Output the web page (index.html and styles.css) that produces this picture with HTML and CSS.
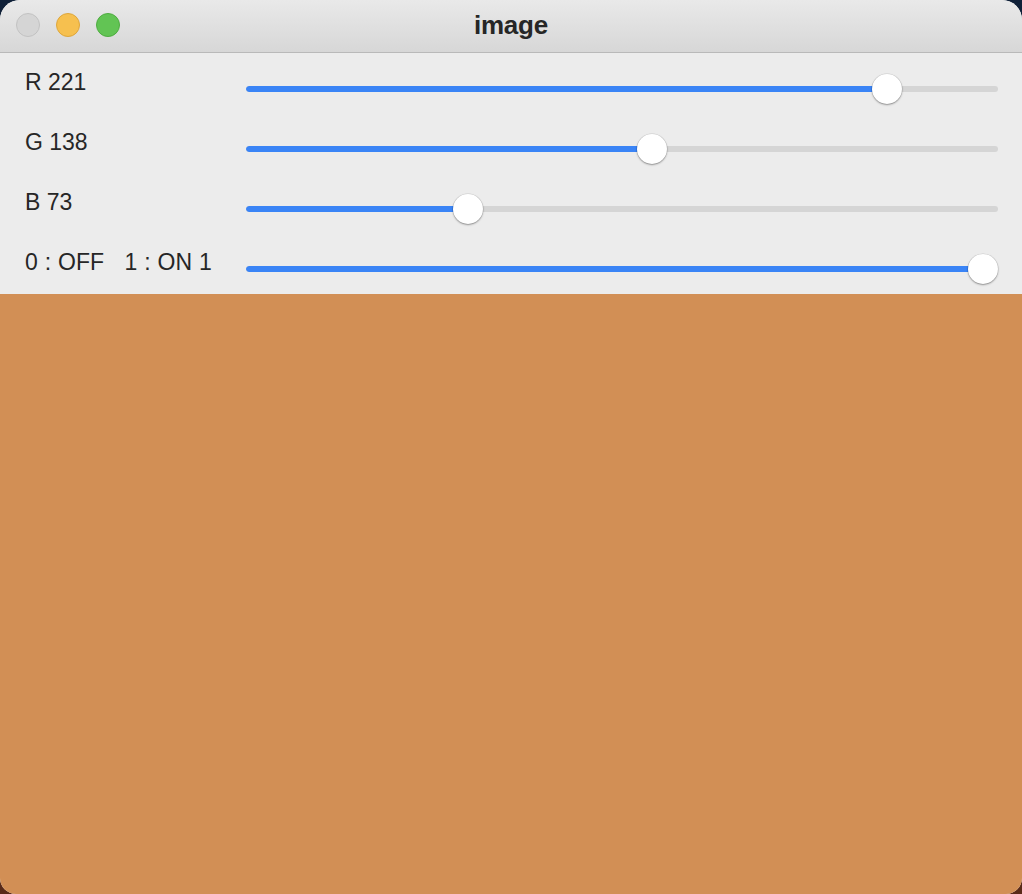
FILE: index.html
```html
<!DOCTYPE html>
<html>
<head>
<meta charset="utf-8">
<title>image</title>
<link rel="stylesheet" href="styles.css">
</head>
<body>
<div class="window">
  <div class="titlebar">
    <div class="lights">
      <span class="light light-close"></span>
      <span class="light light-min"></span>
      <span class="light light-max"></span>
    </div>
    <div class="title">image</div>
  </div>
  <div class="controls">
    <div class="row">
      <div class="label">R 221</div>
      <div class="slider">
        <div class="track"><div class="fill" style="width: calc(15px + (100% - 30px) * 0.8667)"></div></div>
        <div class="knob" style="left: calc((100% - 30px) * 0.8667)"></div>
      </div>
    </div>
    <div class="row">
      <div class="label">G 138</div>
      <div class="slider">
        <div class="track"><div class="fill" style="width: calc(15px + (100% - 30px) * 0.5412)"></div></div>
        <div class="knob" style="left: calc((100% - 30px) * 0.5412)"></div>
      </div>
    </div>
    <div class="row">
      <div class="label">B 73</div>
      <div class="slider">
        <div class="track"><div class="fill" style="width: calc(15px + (100% - 30px) * 0.2863)"></div></div>
        <div class="knob" style="left: calc((100% - 30px) * 0.2863)"></div>
      </div>
    </div>
    <div class="row">
      <div class="label label-wide">0 : OFF   1 : ON 1</div>
      <div class="slider">
        <div class="track"><div class="fill" style="width: calc(15px + (100% - 30px) * 1)"></div></div>
        <div class="knob" style="left: calc((100% - 30px) * 1)"></div>
      </div>
    </div>
  </div>
  <div class="image"></div>
</div>
</body>
</html>
```

FILE: styles.css
```css
html, body {
  margin: 0;
  padding: 0;
}
body {
  width: 1022px;
  height: 894px;
  background: linear-gradient(180deg, #0f2038 0%, #2a1e22 80%, #5a2a18 100%);
  overflow: hidden;
  font-family: "Liberation Sans", Arial, sans-serif;
}
.window {
  width: 1022px;
  height: 894px;
  display: flex;
  flex-direction: column;
  border-radius: 20px 20px 16px 16px;
  overflow: hidden;
  background: #ececec;
}
.titlebar {
  height: 52px;
  flex: none;
  border-bottom: 1px solid #b9b9b9;
  background: linear-gradient(180deg, #e9e9e9 0%, #d7d7d7 100%);
  display: flex;
  align-items: center;
  justify-content: center;
  position: relative;
}
.lights {
  position: absolute;
  left: 16px;
  top: 13px;
  display: flex;
  gap: 16px;
}
.light {
  width: 22px;
  height: 22px;
  border-radius: 50%;
  display: block;
}
.light-close {
  background: #d5d5d5;
  border: 1px solid #c2c2c2;
}
.light-min {
  background: #f6c04f;
  border: 1px solid #dda63c;
}
.light-max {
  background: #62c454;
  border: 1px solid #4fac41;
}
.title {
  font-weight: bold;
  font-size: 26px;
  color: #262626;
  letter-spacing: -0.2px;
  margin-left: 0px;
  margin-top: -1px;
}
.controls {
  height: 241px;
  flex: none;
  box-sizing: border-box;
  padding-top: 5px;
  background: #ececec;
}
.row {
  height: 60px;
  display: flex;
  align-items: center;
  padding-left: 25px;
  padding-right: 24px;
}
.label {
  width: 221px;
  flex: none;
  align-self: flex-start;
  margin-top: 9px;
  font-size: 23px;
  line-height: 30px;
  color: #262626;
  white-space: pre;
}
.label-wide {
  letter-spacing: 0.1px;
  word-spacing: 0.3px;
}
.slider {
  flex: 1;
  height: 30px;
  position: relative;
  display: flex;
  align-items: center;
  margin-top: 1px;
}
.track {
  width: 100%;
  height: 6px;
  border-radius: 3px;
  background: #d5d5d5;
  overflow: hidden;
}
.fill {
  height: 100%;
  background: #3a84f6;
  border-radius: 3px 0 0 3px;
}
.knob {
  position: absolute;
  top: 0;
  width: 30px;
  height: 30px;
  border-radius: 50%;
  background: #ffffff;
  box-shadow: 0 1px 2px rgba(0, 0, 0, 0.35), 0 0 0 0.5px rgba(0, 0, 0, 0.12);
}
.image {
  flex: 1;
  background: #d28f55;
}
```
